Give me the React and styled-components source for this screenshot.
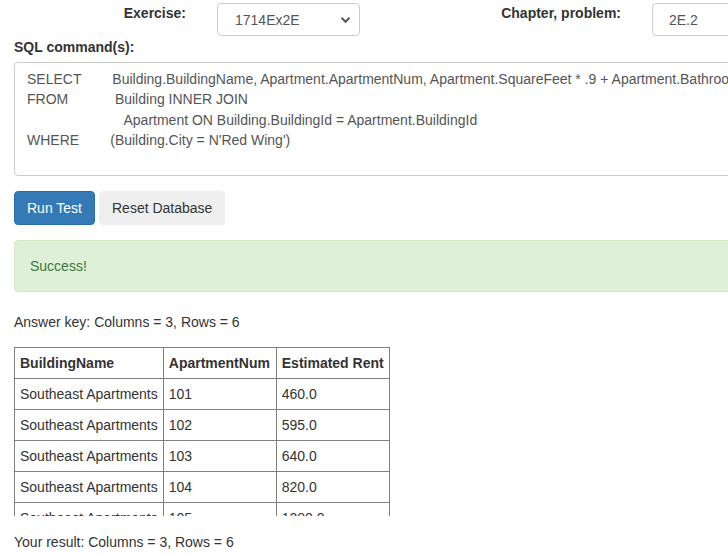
import styled, { createGlobalStyle } from "styled-components";

const GlobalStyle = createGlobalStyle`
  html, body {
    margin: 0;
    padding: 0;
    background: #fff;
    overflow: hidden;
  }
  body {
    font-family: "Liberation Sans", Arial, sans-serif;
    font-size: 14px;
    line-height: 20px;
    color: #333;
  }
`;

const sqlText = [
    "SELECT        Building.BuildingName, Apartment.ApartmentNum, Apartment.SquareFeet * .9 + Apartment.Bathrooms * 100 AS [Estimated Rent]",
    "FROM            Building INNER JOIN",
    "                         Apartment ON Building.BuildingId = Apartment.BuildingId",
    "WHERE        (Building.City = N'Red Wing')",
].join("\n");

const rows = [
    ["Southeast Apartments", "101", "460.0"],
    ["Southeast Apartments", "102", "595.0"],
    ["Southeast Apartments", "103", "640.0"],
    ["Southeast Apartments", "104", "820.0"],
    ["Southeast Apartments", "105", "1280.0"],
    ["Southeast Apartments", "106", "1380.0"],
];

function App() {
    return (
        <>
            <GlobalStyle />
            <Page>
                <TopRow>
                    <FieldLabel>Exercise:</FieldLabel>
                    <SelectBox>
                        <span>1714Ex2E</span>
                        <svg width="11" height="8" viewBox="0 0 11 8">
                            <path d="M1.5 1.8 L5.5 5.8 L9.5 1.8" fill="none" stroke="#555" strokeWidth="2" />
                        </svg>
                    </SelectBox>
                    <FieldLabel>Chapter, problem:</FieldLabel>
                    <InputBox>2E.2</InputBox>
                </TopRow>

                <SectionLabel>SQL command(s):</SectionLabel>
                <SqlBox>{sqlText}</SqlBox>

                <ButtonRow>
                    <Button $primary>Run Test</Button>
                    <Button>Reset Database</Button>
                </ButtonRow>

                <Alert>Success!</Alert>

                <Summary>Answer key: Columns = 3, Rows = 6</Summary>

                <TableWrap>
                    <ResultTable>
                        <thead>
                            <tr>
                                <th>BuildingName</th>
                                <NumHead>ApartmentNum</NumHead>
                                <th>Estimated Rent</th>
                            </tr>
                        </thead>
                        <tbody>
                            {rows.map((r, i) => (
                                <tr key={i}>
                                    {r.map((c, j) => <td key={j}>{c}</td>)}
                                </tr>
                            ))}
                        </tbody>
                    </ResultTable>
                </TableWrap>

                <ResultLine>Your result: Columns = 3, Rows = 6</ResultLine>
            </Page>
        </>
    );
}

const Page = styled.div`
    width: 1100px;
    padding: 3px 0 0 14px;
`;

const TopRow = styled.div`
    display: grid;
    grid-template-columns: 172px 143px 230px 200px;
    column-gap: 31px;
    align-items: start;
`;

const FieldLabel = styled.div`
    font-weight: bold;
    text-align: right;
    color: #333;
`;

const SelectBox = styled.div`
    height: 33px;
    box-sizing: border-box;
    border: 1px solid #ccc;
    border-radius: 4px;
    background: #fff;
    display: flex;
    align-items: center;
    justify-content: space-between;
    padding: 0 8px 0 17px;
    color: #555;
`;

const InputBox = styled.div`
    height: 33px;
    box-sizing: border-box;
    border: 1px solid #ccc;
    border-radius: 4px;
    display: flex;
    align-items: center;
    padding: 0 16px;
    color: #555;
`;

const SectionLabel = styled.div`
    font-weight: bold;
    margin: 1px 0 5px;
`;

const SqlBox = styled.div`
    width: 1000px;
    height: 114px;
    box-sizing: border-box;
    border: 1px solid #ccc;
    border-radius: 4px;
    padding: 6px 12px;
    line-height: 20.4px;
    white-space: pre;
    overflow: hidden;
    color: #555;
`;

const ButtonRow = styled.div`
    display: flex;
    gap: 4px;
    margin-top: 15px;
`;

const Button = styled.button`
    font-family: inherit;
    font-size: 14px;
    line-height: 20px;
    height: 34px;
    padding: 6px 12px;
    border-radius: 4px;
    border: 1px solid ${({ $primary }) => ($primary ? "#2e6da4" : "#efefef")};
    background: ${({ $primary }) => ($primary ? "#337ab7" : "#efefef")};
    color: ${({ $primary }) => ($primary ? "#fff" : "#333")};
`;

const Alert = styled.div`
    width: 1000px;
    box-sizing: border-box;
    margin-top: 15px;
    padding: 15px;
    border: 1px solid #d6e9c6;
    border-radius: 4px;
    background: #dff0d8;
    color: #3c763d;
`;

const Summary = styled.div`
    margin-top: 20px;
`;

const TableWrap = styled.div`
    margin-top: 15px;
    height: 169px;
    overflow: hidden;
    width: max-content;
`;

const ResultTable = styled.table`
    border-collapse: collapse;

    th, td {
        border: 1px solid #808080;
        padding: 5px;
        text-align: left;
        white-space: nowrap;
    }

    th {
        font-weight: bold;
    }
`;

const NumHead = styled.th`
    min-width: 102px;
`;

const ResultLine = styled.div`
    margin-top: 16px;
`;

export default App;
